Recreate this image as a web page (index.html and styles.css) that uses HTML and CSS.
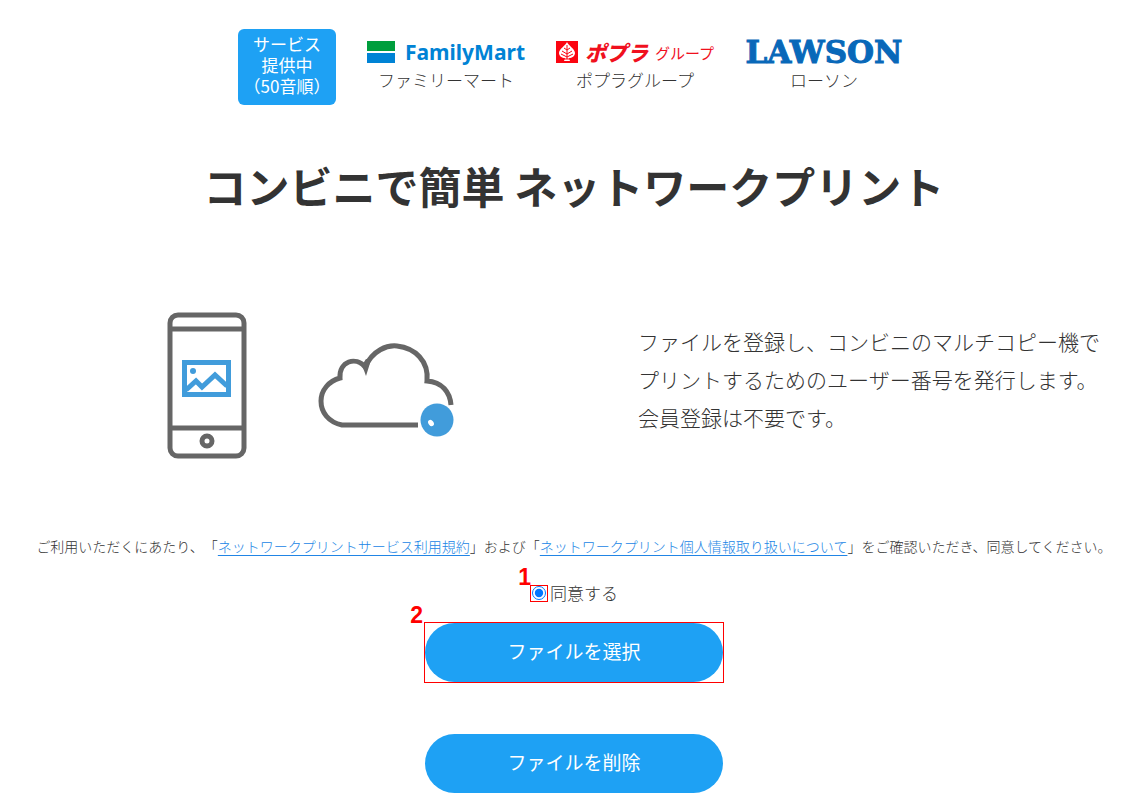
FILE: index.html
```html
<!DOCTYPE html>
<html lang="ja">
<head>
<meta charset="utf-8">
<meta name="viewport" content="width=device-width, initial-scale=1">
<title>ネットワークプリント</title>
<link rel="stylesheet" href="styles.css">
</head>
<body>
<header class="partners">
  <div class="badge">サービス<br>提供中<br>（50音順）</div>
  <div class="partner">
    <div class="logo logo-family">
      <svg width="28" height="22" viewBox="0 0 28 22" aria-hidden="true"><path fill="#009e3d" d="M0 0h28v10H0z"/><path fill="#0083d5" d="M0 12h28v10H0z"/></svg>
      <span>FamilyMart</span>
    </div>
    <div class="name">ファミリーマート</div>
  </div>
  <div class="partner">
    <div class="logo logo-poplar">
      <svg width="22" height="22" viewBox="0 0 22 22" aria-hidden="true">
        <path fill="#fb0511" d="M0 0h22v22H0z"/>
        <path fill="#fff" d="M11 1c1 3 8 7 8 11 0 3-3 5-6 5l1 3H8l1-3c-3 0-6-2-6-5 0-4 7-8 8-11z"/>
        <path fill="none" stroke="#fb0511" d="M11 4v14M8 7l3 2 3-2M6 10l5 3 5-3M5 13l6 3 6-3M8 18h6"/>
      </svg>
      <span class="poplar-main">ポプラ</span>
      <span class="poplar-sub">グループ</span>
    </div>
    <div class="name">ポプラグループ</div>
  </div>
  <div class="partner">
    <div class="logo logo-lawson">LAWSON</div>
    <div class="name">ローソン</div>
  </div>
</header>
<main>
  <h1 class="title">コンビニで簡単 ネットワークプリント</h1>
  <section class="intro">
    <svg class="art" width="290" height="148" viewBox="0 0 290 148" aria-hidden="true">
      <g fill="none" stroke="#666" stroke-width="5">
        <rect x="4" y="4" width="74" height="141" rx="8"/>
        <path d="M4 18h74M4 117h74"/>
        <circle cx="41" cy="130" r="5"/>
        <path d="M252 114H176C162 111 155 101 155 90C155 79 163 70 174 67C173 50 190 45 199 56C207 39 221 34 231 35C249 37 263 50 261 70C276 71 284 81 285 94"/>
      </g>
      <path fill="#666" d="m196 54 4-6 5 1-5 16z"/>
      <g fill="none" stroke="#419cdb" stroke-width="5">
        <path d="M18.500 51.500h44v32h-44zM20 79l10-9 6 6 13-12 12 11"/>
      </g>
      <circle cx="27" cy="60" r="3" fill="#419cdb"/>
      <circle cx="271" cy="109" r="16.500" fill="#419cdb"/>
      <ellipse cx="265" cy="112" rx="2.500" ry="3.500" fill="#fff" transform="rotate(-35 265 112)"/>
    </svg>
    <p class="lead">ファイルを登録し、コンビニのマルチコピー機で<br>プリントするためのユーザー番号を発行します。<br>会員登録は不要です。</p>
  </section>
  <p class="terms">ご利用いただくにあたり、「<a href="#">ネットワークプリントサービス利用規約</a>」および「<a href="#">ネットワークプリント個人情報取り扱いについて</a>」をご確認いただき、同意してください。</p>
  <div class="agree">
    <span class="marked radio-box"><span class="mark mark-one">1</span><input type="radio" id="agree" name="agree" checked></span>
    <label for="agree">同意する</label>
  </div>
  <div class="actions">
    <div class="marked button-box"><span class="mark mark-two">2</span><button type="button">ファイルを選択</button></div>
    <button type="button">ファイルを削除</button>
  </div>
</main>
</body>
</html>
```
FILE: styles.css
```css
* { box-sizing: border-box; }
body {
  margin: 0;
  background: #fff;
  color: #333;
  font-family: "Noto Sans CJK JP", sans-serif;
  font-weight: 300;
  text-spacing-trim: space-all;
}
.partners {
  display: flex;
  justify-content: center;
  gap: 31px;
  padding: 29px 4px 0 0;
}
.badge {
  width: 98px;
  padding: 4px 0 9px;
  border-radius: 6px;
  background: #1ea1f4;
  color: #fff;
  font-size: 17px;
  font-weight: 400;
  line-height: 21px;
  text-align: center;
  white-space: nowrap;
}
.partner { width: 158px; padding-top: 8px; }
.logo {
  display: flex;
  align-items: center;
  justify-content: space-between;
  height: 30px;
  white-space: nowrap;
}
.logo svg { flex: none; }
.logo-family { color: #0083d5; font: 700 21px/30px "Noto Sans", sans-serif; }
.logo-poplar { color: #f0101e; }
.poplar-main { font-size: 21px; font-weight: 900; font-style: italic; }
.poplar-sub { font-size: 15px; font-weight: 400; }
.logo-lawson {
  justify-content: center;
  color: #0868b9;
  font: 700 31px/30px "DejaVu Serif", serif;
  -webkit-text-stroke: 1px #0868b9;
}
.name { font-size: 17px; line-height: 26px; text-align: center; }
.title {
  margin: 48px 0 0;
  font-size: 43px;
  font-weight: 700;
  line-height: 64px;
  text-align: center;
}
main { padding-left: 3px; }
.intro {
  display: grid;
  grid-template-columns: 27fr 22fr;
  gap: 16px;
  align-items: center;
  margin: 94px 0 0 -3px;
}
.art { justify-self: center; }
.lead {
  margin: 0;
  padding-bottom: 12px;
  font-size: 21px;
  line-height: 38px;
}
.terms {
  margin: 75px 0 0;
  font-size: 14px;
  line-height: 24px;
  text-align: center;
}
.terms a { color: #2185e5; text-underline-offset: 3px; }
.agree {
  display: flex;
  justify-content: center;
  align-items: center;
  gap: 2px;
  margin-top: 21px;
  font-size: 17px;
  line-height: 28px;
}
.marked { position: relative; border: 1px solid #f00; }
.radio-box {
  display: flex;
  align-items: center;
  justify-content: center;
  width: 18px;
  height: 17px;
}
.radio-box input { width: 14px; height: 14px; margin: 0; accent-color: #0075ff; }
.mark {
  position: absolute;
  color: #f00;
  font: 700 23px/24px "Liberation Sans", sans-serif;
}
.mark-one { right: 100%; bottom: 12px; }
.mark-two { right: 100%; bottom: 100%; margin: 0 2px -4px 0; }
.actions {
  display: flex;
  flex-direction: column;
  align-items: center;
  gap: 51px;
  padding: 15px 0 7px;
}
.actions button {
  display: block;
  width: 298px;
  height: 59px;
  padding: 0 0 4px;
  border: 0;
  border-radius: 30px;
  background: #1ea1f4;
  color: #fff;
  font: 400 19px/28px "Noto Sans CJK JP", sans-serif;
  cursor: pointer;
}
```
